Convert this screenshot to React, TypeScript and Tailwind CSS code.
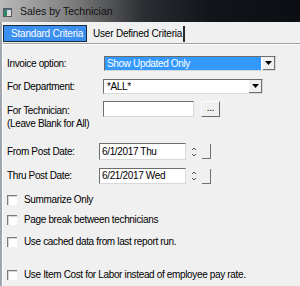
import React from "react";

const font = { fontFamily: '"Liberation Sans", Arial, sans-serif' };

function DropArrow() {
  return (
    <svg width="7" height="4" viewBox="0 0 7 4">
      <path d="M0 0h7L3.5 4z" fill="#000" />
    </svg>
  );
}

function Spin() {
  return (
    <div className="ml-[5px] flex h-[16px] items-center gap-[5px]">
      <svg width="6" height="14" viewBox="0 0 6 14">
        <path d="M1 5l2-2 2 2" stroke="#555" strokeWidth="1" fill="none" />
        <path d="M1 9l2 2 2-2" stroke="#555" strokeWidth="1" fill="none" />
      </svg>
      <div className="h-[15px] w-[9px] border-r border-b border-[#6f6f6f] bg-[#f0f0f0]" />
    </div>
  );
}

function Check({ label, className }: { label: string; className: string }) {
  return (
    <div className={`flex h-[12px] items-center ${className}`}>
      <span className="h-[10px] w-[10px] border-t border-l border-[#7a7a7a] bg-white shadow-[inset_1px_1px_0_#d6d6d6]" />
      <span className="ml-[7px] whitespace-nowrap">{label}</span>
    </div>
  );
}

const sunken =
  "border border-t-[#6d6d6d] border-l-[#6d6d6d] border-b-[#d8d8d8] border-r-[#d8d8d8] bg-white";

export default function App() {
  return (
    <div className="flex h-[286px] w-[300px] flex-col overflow-hidden bg-[#f0f0f0] text-black" style={font}>
      {/* title bar */}
      <div className="flex h-[22px] shrink-0 items-center bg-[linear-gradient(to_right,#b9b9b9_0%,#7b7b7b_25%,#2a2d31_48%,#11151a_70%,#0b0e12_100%)] pl-[3px]">
        <svg width="9" height="9" viewBox="0 0 9 9" className="mt-[2px]">
          <rect x="0.5" y="0.5" width="8" height="8" fill="#dcdcdc" stroke="#5a5a5a" />
          <rect x="1" y="2" width="3" height="6" fill="#2f8a6a" />
          <rect x="1" y="1" width="7" height="1" fill="#4a6a8a" />
        </svg>
        <span className="ml-[8px] mt-[1px] whitespace-nowrap text-[10.5px] leading-none text-[#111]">
          Sales by Technician
        </span>
      </div>

      <div className="flex flex-1">
        <div className="w-[3px] shrink-0 border-r border-white bg-[#9ea6ae]" />
        <div className="flex flex-1 flex-col text-[10px] leading-none tracking-[-0.35px]">
          {/* tabs */}
          <div className="flex h-[22px] shrink-0 items-end border-b border-[#a0a0a0]">
            <div className="mb-[1px] flex h-[17px] w-[84px] items-center whitespace-nowrap border border-[#1c2a3a] bg-[#3a8ff0] pl-[7px] tracking-[-0.2px] text-white">
              Standard Criteria
            </div>
            <div className="mb-[1px] flex h-[16px] w-[98px] items-center whitespace-nowrap border-r-2 border-[#2a2a2a] pl-[6px] tracking-[-0.2px]">
              User Defined Criteria
            </div>
          </div>

          {/* panel */}
          <div className="flex flex-col border-t border-white pl-[4px]">
            <div className="mt-[11px] flex h-[15px] items-center">
              <span className="w-[97px] whitespace-nowrap">Invoice option:</span>
              <div className={`flex h-[15px] w-[172px] items-center ${sunken}`}>
                <div className="flex h-full flex-1 items-center bg-[#3399ff] pl-[2px] text-white">
                  Show Updated Only
                </div>
                <div className="ml-[2px] flex h-[13px] w-[12px] items-center justify-center border-r border-b border-[#707070] bg-[#f0f0f0]">
                  <DropArrow />
                </div>
              </div>
            </div>

            <div className="mt-[8px] flex h-[15px] items-center">
              <span className="w-[96px] whitespace-nowrap">For Department:</span>
              <div className={`flex h-[15px] w-[160px] items-center ${sunken}`}>
                <div className="flex-1 pl-[3px]">*ALL*</div>
                <div className="flex h-[13px] w-[13px] items-center justify-center border-r border-b border-[#707070] bg-[#f0f0f0]">
                  <DropArrow />
                </div>
              </div>
            </div>

            <div className="mt-[7px] flex h-[26px] items-start">
              <div className="w-[96px] whitespace-nowrap pt-[3px] leading-[13px]">
                For Technician:
                <br />
                (Leave Blank for All)
              </div>
              <div className={`h-[16px] w-[91px] ${sunken}`} />
              <div className="ml-[7px] flex h-[16px] w-[19px] items-center justify-center border border-t-white border-l-white border-b-[#696969] border-r-[#696969] bg-[#f0f0f0] pb-[3px]">
                ...
              </div>
            </div>

            <div className="mt-[16px] flex h-[17px] items-center">
              <span className="w-[92px] whitespace-nowrap">From Post Date:</span>
              <div className={`flex h-[17px] w-[87px] items-center whitespace-nowrap pl-[2px] ${sunken}`}>
                6/1/2017 Thu
              </div>
              <Spin />
            </div>

            <div className="mt-[8px] flex h-[16px] items-center">
              <span className="w-[92px] whitespace-nowrap">Thru Post Date:</span>
              <div className={`flex h-[16px] w-[87px] items-center whitespace-nowrap pl-[2px] ${sunken}`}>
                6/21/2017 Wed
              </div>
              <Spin />
            </div>

            <Check className="mt-[10px]" label="Summarize Only" />
            <Check className="mt-[8px]" label="Page break between technicians" />
            <Check className="mt-[10px]" label="Use cached data from last report run." />
            <Check className="mt-[21px]" label="Use Item Cost for Labor instead of employee pay rate." />
          </div>
        </div>
      </div>
    </div>
  );
}
